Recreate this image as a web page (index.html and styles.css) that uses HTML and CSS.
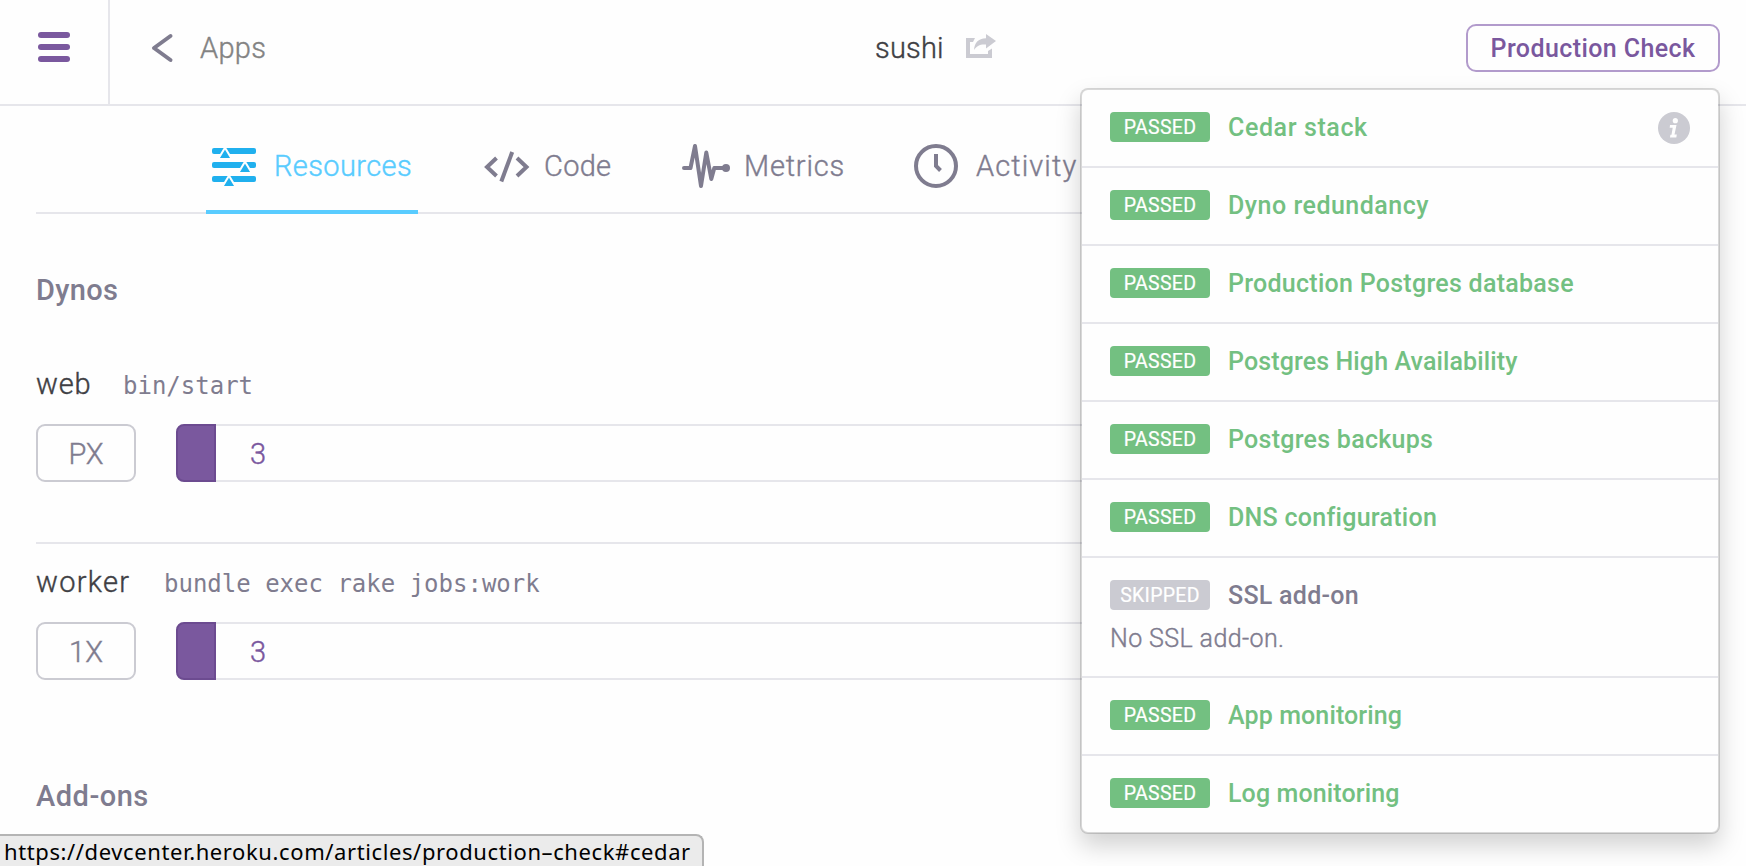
FILE: index.html
```html
<!DOCTYPE html>
<html lang="en">
<head>
<meta charset="utf-8">
<title>sushi · Resources</title>
<link rel="stylesheet" href="styles.css">
</head>
<body>
<header class="topbar">
  <button class="menu" aria-label="Menu"><span class="menu-line"></span><span class="menu-line"></span><span class="menu-line"></span></button>
  <a class="back">
    <svg class="back-icon" width="24" height="32" viewBox="0 0 24 32"><path d="M20.500 4 4 16l16.500 12" fill="none" stroke="#7f7c8f" stroke-width="4" stroke-linecap="round" stroke-linejoin="round"/></svg>
    <span class="back-label">Apps</span>
  </a>
  <div class="title">
    <span class="app-name">sushi</span>
    <svg class="share-icon" width="30" height="24" viewBox="0 0 30 24"><path d="M0 4h9L7 8H4v12h18v-3l4-2.500V24H0Z" fill="#cbcbd2"/><path d="M20 0l10 7-10 7.500v-4C14 10 10.500 12 8 16 8.500 9 12 4.500 20 4.300Z" fill="#cbcbd2"/></svg>
  </div>
  <button class="check-button">Production Check</button>

  <ul class="checks">
    <li class="check"><div class="check-head"><span class="badge">PASSED</span><span class="check-name check-cedar">Cedar stack</span>
      <svg class="info" width="32" height="32" viewBox="0 0 32 32"><circle cx="16" cy="16" r="16" fill="#cbcbd2"/><circle cx="17.300" cy="8.700" r="2.600" fill="#fefefe"/><path d="M12 13h6.500l-2 9.500h2.300l-.5 3H12l.4-2.800h1.100l1.200-6.900h-3Z" fill="#fefefe"/></svg></div></li>
    <li class="check"><div class="check-head"><span class="badge">PASSED</span><span class="check-name check-dyno">Dyno redundancy</span></div></li>
    <li class="check"><div class="check-head"><span class="badge">PASSED</span><span class="check-name">Production Postgres database</span></div></li>
    <li class="check"><div class="check-head"><span class="badge">PASSED</span><span class="check-name check-tight">Postgres High Availability</span></div></li>
    <li class="check"><div class="check-head"><span class="badge">PASSED</span><span class="check-name">Postgres backups</span></div></li>
    <li class="check"><div class="check-head"><span class="badge">PASSED</span><span class="check-name">DNS configuration</span></div></li>
    <li class="check check-skipped"><div class="check-head"><span class="badge">SKIPPED</span><span class="check-name">SSL add-on</span></div><p class="check-note">No SSL add-on.</p></li>
    <li class="check"><div class="check-head"><span class="badge">PASSED</span><span class="check-name check-tight">App monitoring</span></div></li>
    <li class="check"><div class="check-head"><span class="badge">PASSED</span><span class="check-name check-tight">Log monitoring</span></div></li>
  </ul>
</header>

<main class="content">
  <nav class="tabs">
    <a class="tab tab-active">
      <svg width="44" height="44" viewBox="0 0 44 44"><g fill="#20b0ee"><rect y="6" width="44" height="6" rx="2"/><rect y="20" width="44" height="6" rx="2"/><rect y="34" width="44" height="6" rx="2"/></g><g fill="#20b0ee" stroke="#fefefe" stroke-width="2"><path d="M6.200 17 13 5.800 19.800 17Z"/><path d="M26.200 31 33 19.800 39.800 31Z"/><path d="M10.200 45 17 33.800 23.800 45Z"/></g></svg>
      <span class="tab-label tab-resources">Resources</span>
    </a>
    <a class="tab">
      <svg class="tab-icon" width="46" height="44" viewBox="0 0 46 44"><g fill="none" stroke="#7f7c8f" stroke-width="4"><path d="M12.500 14 3 23l9.500 9"/><path d="M33 14l9.500 9L33 32"/><path d="M28.200 8 17.300 37.500"/></g></svg>
      <span class="tab-label tab-code">Code</span>
    </a>
    <a class="tab">
      <svg class="tab-icon" width="48" height="44" viewBox="0 0 48 44"><path d="M2 24h6.500L13 2l6 40 5.300-33.500L29.300 35l3-11H43" fill="none" stroke="#7f7c8f" stroke-width="4" stroke-linecap="round" stroke-linejoin="round"/><circle cx="44" cy="24" r="4" fill="#7f7c8f"/></svg>
      <span class="tab-label tab-metrics">Metrics</span>
    </a>
    <a class="tab">
      <svg class="tab-icon" width="44" height="44" viewBox="0 0 44 44"><g fill="none" stroke="#7f7c8f" stroke-width="4"><circle cx="22" cy="22" r="20"/><path d="M22 10v12l4.500 4.500"/></g></svg>
      <span class="tab-label tab-activity">Activity</span>
    </a>
  </nav>

  <h2 class="section-title">Dynos</h2>
  <section class="dyno">
    <div class="dyno-head"><span class="dyno-name">web</span><code class="dyno-command">bin/start</code></div>
    <div class="dyno-scale"><button class="dyno-size">PX</button><div class="slider"><div class="slider-handle"></div><span class="slider-value">3</span></div></div>
  </section>
  <section class="dyno dyno-divided">
    <div class="dyno-head"><span class="dyno-name dyno-worker">worker</span><code class="dyno-command">bundle exec rake jobs:work</code></div>
    <div class="dyno-scale"><button class="dyno-size">1X</button><div class="slider"><div class="slider-handle"></div><span class="slider-value">3</span></div></div>
  </section>
  <h2 class="section-title section-addons">Add-ons</h2>
</main>
<div class="status">https://devcenter.heroku.com/articles/production–check#cedar</div>
</body>
</html>
```

FILE: styles.css
```css
* { box-sizing: border-box; margin: 0; padding: 0; }
body {
  position: relative;
  height: 866px;
  overflow: hidden;
  background: #fefefe;
  color: #7f7c8f;
  font: 300 29px/34px Roboto, sans-serif;
}
button { background: none; border: 0; font: inherit; color: inherit; }
svg { display: block; flex: none; }

/* Light text gets a hairline stroke for a book weight */
.back-label, .app-name, .tab-label, .dyno-name, .dyno-size, .slider-value, .check-note { -webkit-text-stroke: .4px currentColor; }

/* Header */
.topbar {
  position: relative;
  z-index: 2;
  display: grid;
  grid-template-columns: 110px 765px 1fr auto;
  height: 106px;
  padding-right: 26px;
  border-bottom: 2px solid #e6e6eb;
}
.menu {
  display: flex;
  flex-direction: column;
  gap: 6px;
  padding: 32px 0 0 38px;
  border-right: 2px solid #e6e6eb;
}
.menu-line { width: 32px; height: 6px; border-radius: 3px; background: #7a589e; }
.back { display: flex; gap: 26px; padding: 32px 0 0 40px; }
.back-label { color: #838383; line-height: 32px; letter-spacing: .3px; }
.title { display: flex; justify-content: space-between; width: 121px; padding-top: 31px; }
.app-name { color: #3f3f44; letter-spacing: .2px; }
.share-icon { margin-top: 3px; }
.check-button {
  width: 254px;
  height: 48px;
  margin-top: 24px;
  border: 2px solid #b29bcc;
  border-radius: 10px;
  color: #7a589e;
  font-size: 25px;
  font-weight: 500;
  line-height: 43px;
  letter-spacing: .4px;
}

/* Production check menu */
.checks {
  position: absolute;
  top: 88px;
  right: 26px;
  width: 640px;
  border: 2px solid rgba(0, 0, 0, .15);
  border-radius: 8px;
  background: #fefefe;
  background-clip: padding-box;
  box-shadow: 0 12px 24px rgba(0, 0, 0, .175);
  list-style: none;
}
.check { height: 78px; padding: 22px 28px 0; border-bottom: 2px solid #e6e6eb; color: #73c081; }
.check:last-child { height: 76px; border-bottom: 0; }
.check-head { display: flex; gap: 18px; height: 32px; }
.badge {
  width: 100px;
  height: 30px;
  border-radius: 4px;
  background: #73c081;
  color: #fff;
  font-size: 19.500px;
  font-weight: 400;
  line-height: 31px;
  letter-spacing: .3px;
  text-align: center;
  -webkit-text-stroke: .2px currentColor;
}
.check-name { flex: 1; font-size: 25px; font-weight: 500; line-height: 32px; letter-spacing: .27px; }
.check-cedar { letter-spacing: .6px; }
.check-dyno { letter-spacing: .5px; }
.check-tight { letter-spacing: .12px; }
.check-skipped { height: 120px; color: #7f7c8f; }
.check-skipped .badge { background: #cbcbd2; }
.check-note { margin-top: 11px; font-size: 25px; line-height: 31px; letter-spacing: .4px; }

/* Tabs */
.content { padding: 0 36px; }
.tabs {
  display: grid;
  grid-template-columns: 272px 198px 232px auto;
  height: 108px;
  padding-left: 170px;
  border-bottom: 2px solid #e6e6eb;
}
.tab { display: flex; gap: 16px; justify-self: start; height: 108px; padding: 36px 6px 0; }
.tab-active { width: 212px; border-bottom: 4px solid #59ccff; color: #59ccff; }
.tab-icon { margin-top: 2px; }
.tab-label { line-height: 49px; letter-spacing: .8px; white-space: nowrap; }
.tab-resources { margin-left: 2px; letter-spacing: .4px; }
.tab-code { margin-left: -2px; letter-spacing: .3px; }
.tab-metrics { margin-left: -2px; }
.tab-activity { margin-left: 2px; letter-spacing: 1.1px; }

/* Dynos */
.section-title { margin-top: 59px; font-size: 29px; font-weight: 500; line-height: 34px; letter-spacing: .3px; }
.dyno { margin-top: 60px; }
.dyno-head { display: flex; align-items: baseline; height: 34px; }
.dyno-name { width: 87px; color: #3f3f44; letter-spacing: .8px; }
.dyno-worker { width: 128px; letter-spacing: 1.3px; }
.dyno-command { font: 24px/34px "DejaVu Sans Mono", monospace; white-space: pre; }
.dyno-scale { display: flex; gap: 40px; margin-top: 23px; }
.dyno-size { width: 100px; height: 58px; padding-top: 1px; border: 2px solid #cbcbd2; border-radius: 9px; }
.slider {
  flex: 1;
  display: flex;
  height: 58px;
  border: 2px solid #e6e6eb;
  border-left: 0;
  border-radius: 8px;
}
.slider-handle { width: 40px; height: 58px; margin-top: -2px; border: 2px solid #6c4b90; border-radius: 8px 0 0 8px; background: #7a589e; }
.slider-value { margin-left: 34px; color: #7a589e; line-height: 56px; }
.dyno-divided { margin-top: 60px; padding-top: 21px; border-top: 2px solid #e6e6eb; }
.section-addons { margin-top: 99px; letter-spacing: .5px; }

/* Browser status bubble */
.status {
  position: absolute;
  left: 0;
  bottom: 0;
  width: 704px;
  height: 32px;
  padding-left: 4px;
  border-top: 2px solid #b4b4b4;
  border-right: 2px solid #b4b4b4;
  border-radius: 0 8px 0 0;
  background: #ebebeb;
  color: #000;
  font: 22px/30px "Noto Sans", sans-serif;
  letter-spacing: .6px;
  white-space: nowrap;
}
```
